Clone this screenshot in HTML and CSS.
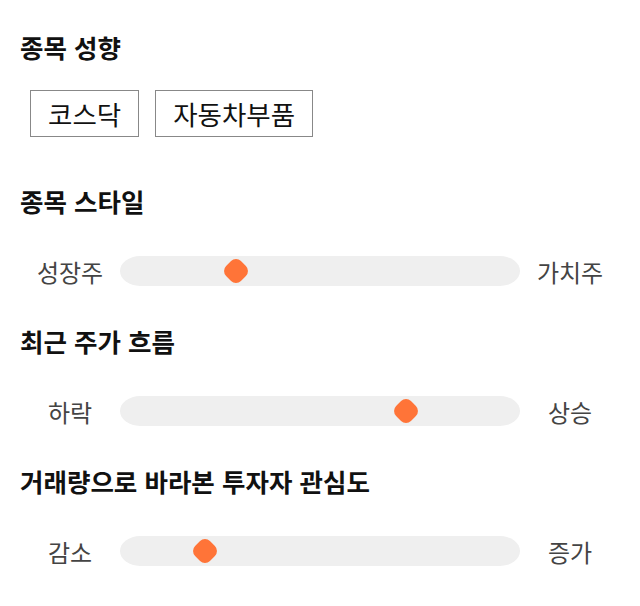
FILE: index.html
```html
<!DOCTYPE html>
<html lang="ko">
<head>
<meta charset="utf-8">
<link rel="stylesheet" href="styles.css">
</head>
<body>
<div class="page">
  <section class="section">
    <h2 class="title">종목 성향</h2>
    <div class="chips">
      <span class="chip">코스닥</span>
      <span class="chip">자동차부품</span>
    </div>
  </section>
  <section class="section">
    <h2 class="title">종목 스타일</h2>
    <div class="slider-row">
      <span class="label">성장주</span>
      <div class="track"><span class="thumb" style="left: 29%"></span></div>
      <span class="label">가치주</span>
    </div>
  </section>
  <section class="section">
    <h2 class="title">최근 주가 흐름</h2>
    <div class="slider-row">
      <span class="label">하락</span>
      <div class="track"><span class="thumb" style="left: 71.5%"></span></div>
      <span class="label">상승</span>
    </div>
  </section>
  <section class="section">
    <h2 class="title">거래량으로 바라본 투자자 관심도</h2>
    <div class="slider-row">
      <span class="label">감소</span>
      <div class="track"><span class="thumb" style="left: 21.25%"></span></div>
      <span class="label">증가</span>
    </div>
  </section>
</div>
</body>
</html>
```

FILE: styles.css
```css
* { box-sizing: border-box; }
html, body { margin: 0; padding: 0; background: #fff; }
body {
  font-family: "Noto Sans CJK KR", "Noto Sans", sans-serif;
  color: #111;
}
.page {
  padding: 32px 20px 0 20px;
  display: flex;
  flex-direction: column;
  gap: 40px;
}
.section {
  display: flex;
  flex-direction: column;
  gap: 40px;
}
.section:first-child { gap: 28px; margin-bottom: 9px; }
.title {
  margin: 0;
  font-size: 25.5px;
  line-height: 30px;
  font-weight: 700;
  color: #111;
}
.chips {
  display: flex;
  gap: 16px;
  padding-left: 10px;
}
.chip {
  height: 47px;
  padding: 0 17px;
  border: 1px solid #888;
  display: flex;
  align-items: center;
  font-size: 26.5px;
  color: #111;
}
.slider-row {
  display: flex;
  align-items: center;
  height: 30px;
}
.label {
  width: 100px;
  text-align: center;
  font-size: 24px;
  color: #444;
}
.track {
  flex: 1;
  height: 30px;
  background: #efefef;
  border-radius: 20px / 15px;
  position: relative;
}
.thumb {
  position: absolute;
  top: 50%;
  width: 21px;
  height: 21px;
  background: #ff7438;
  border-radius: 7px;
  transform: translate(-50%, -50%) rotate(45deg);
}
```
